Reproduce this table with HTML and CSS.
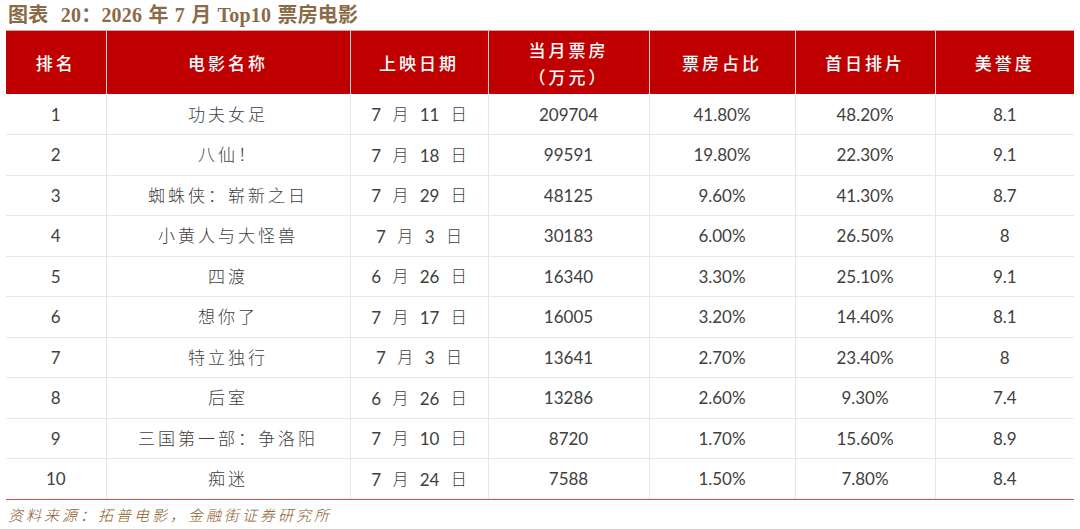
FILE: index.html
```html
<!DOCTYPE html>
<html lang="zh">
<head>
<meta charset="utf-8">
<link rel="stylesheet" href="styles.css">
</head>
<body>
<div class="page">
  <div class="title">图表&nbsp;&nbsp;20：2026 年 7 月 Top10 票房电影</div>
  <table class="tbl">
    <colgroup>
      <col class="c1"><col class="c2"><col class="c3"><col class="c4"><col class="c5"><col class="c6"><col class="c7">
    </colgroup>
    <thead>
      <tr>
        <th>排名</th><th>电影名称</th><th>上映日期</th><th>当月票房<br>（万元）</th><th>票房占比</th><th>首日排片</th><th>美誉度</th>
      </tr>
    </thead>
    <tbody>
      <tr><td class="num">1</td><td class="zh">功夫女足</td><td class="date">7 <span class="zh">月</span> 11 <span class="zh">日</span></td><td class="num">209704</td><td class="num">41.80%</td><td class="num">48.20%</td><td class="num">8.1</td></tr>
      <tr><td class="num">2</td><td class="zh">八仙！</td><td class="date">7 <span class="zh">月</span> 18 <span class="zh">日</span></td><td class="num">99591</td><td class="num">19.80%</td><td class="num">22.30%</td><td class="num">9.1</td></tr>
      <tr><td class="num">3</td><td class="zh">蜘蛛侠：崭新之日</td><td class="date">7 <span class="zh">月</span> 29 <span class="zh">日</span></td><td class="num">48125</td><td class="num">9.60%</td><td class="num">41.30%</td><td class="num">8.7</td></tr>
      <tr><td class="num">4</td><td class="zh">小黄人与大怪兽</td><td class="date">7 <span class="zh">月</span> 3 <span class="zh">日</span></td><td class="num">30183</td><td class="num">6.00%</td><td class="num">26.50%</td><td class="num">8</td></tr>
      <tr><td class="num">5</td><td class="zh">四渡</td><td class="date">6 <span class="zh">月</span> 26 <span class="zh">日</span></td><td class="num">16340</td><td class="num">3.30%</td><td class="num">25.10%</td><td class="num">9.1</td></tr>
      <tr><td class="num">6</td><td class="zh">想你了</td><td class="date">7 <span class="zh">月</span> 17 <span class="zh">日</span></td><td class="num">16005</td><td class="num">3.20%</td><td class="num">14.40%</td><td class="num">8.1</td></tr>
      <tr><td class="num">7</td><td class="zh">特立独行</td><td class="date">7 <span class="zh">月</span> 3 <span class="zh">日</span></td><td class="num">13641</td><td class="num">2.70%</td><td class="num">23.40%</td><td class="num">8</td></tr>
      <tr><td class="num">8</td><td class="zh">后室</td><td class="date">6 <span class="zh">月</span> 26 <span class="zh">日</span></td><td class="num">13286</td><td class="num">2.60%</td><td class="num">9.30%</td><td class="num">7.4</td></tr>
      <tr><td class="num">9</td><td class="zh">三国第一部：争洛阳</td><td class="date">7 <span class="zh">月</span> 10 <span class="zh">日</span></td><td class="num">8720</td><td class="num">1.70%</td><td class="num">15.60%</td><td class="num">8.9</td></tr>
      <tr><td class="num">10</td><td class="zh">痴迷</td><td class="date">7 <span class="zh">月</span> 24 <span class="zh">日</span></td><td class="num">7588</td><td class="num">1.50%</td><td class="num">7.80%</td><td class="num">8.4</td></tr>
    </tbody>
  </table>
  <div class="source">资料来源：拓普电影，金融街证券研究所</div>
</div>
</body>
</html>
```

FILE: styles.css
```css
html, body {
  margin: 0;
  padding: 0;
  background: #ffffff;
}
.page {
  width: 1080px;
  height: 529px;
  padding: 0 6px;
  box-sizing: border-box;
}
.title {
  height: 30px;
  line-height: 30px;
  padding-left: 2px;
  font-family: "Liberation Serif", "Noto Sans CJK SC", serif;
  font-weight: bold;
  font-size: 20px;
  color: #8b6a47;
  letter-spacing: 0.2px;
  word-spacing: 1px;
}
.tbl {
  width: 1068px;
  border-collapse: collapse;
  table-layout: fixed;
}
.c1 { width: 100px; }
.c2 { width: 244px; }
.c3 { width: 138px; }
.c4 { width: 161px; }
.c5 { width: 146px; }
.c6 { width: 140px; }
.c7 { width: 139px; }
.tbl th {
  background: #c00000;
  color: #ffffff;
  height: 63px;
  padding: 0;
  font-family: "Noto Sans CJK SC", sans-serif;
  font-weight: 500;
  font-size: 17px;
  letter-spacing: 3px;
  line-height: 27px;
  text-align: center;
  border-left: 1.5px solid #e8d0d0;
  border-top: 1px solid #d9a0a0;
}
.tbl th:first-child { border-left: none; }
.tbl td {
  height: 40.5px;
  padding: 0;
  text-align: center;
  color: #404040;
  font-size: 17px;
  border-left: 1.5px solid #e6e6e6;
  border-top: 1.5px solid #e6e6e6;
  box-sizing: border-box;
}
.tbl td:first-child { border-left: none; }
.tbl tbody tr:first-child td { border-top: none; }
.tbl tbody tr:last-child td { border-bottom: 1.5px solid #e04848; }
.num {
  font-family: "Lato", "Open Sans", sans-serif;
}
.zh {
  font-family: "Noto Sans CJK SC", sans-serif;
  font-weight: 300;
  font-size: 16px;
  letter-spacing: 3px;
  position: relative;
  top: -1px;
}
.date {
  font-family: "Lato", sans-serif;
  word-spacing: 7px;
}
.date .zh {
  letter-spacing: 0;
}
.source {
  padding-left: 2px;
  margin-top: 4px;
  font-family: "Noto Sans CJK SC", sans-serif;
  font-style: italic;
  font-weight: 300;
  font-size: 15px;
  letter-spacing: 3px;
  color: #8b5a2b;
}
```
